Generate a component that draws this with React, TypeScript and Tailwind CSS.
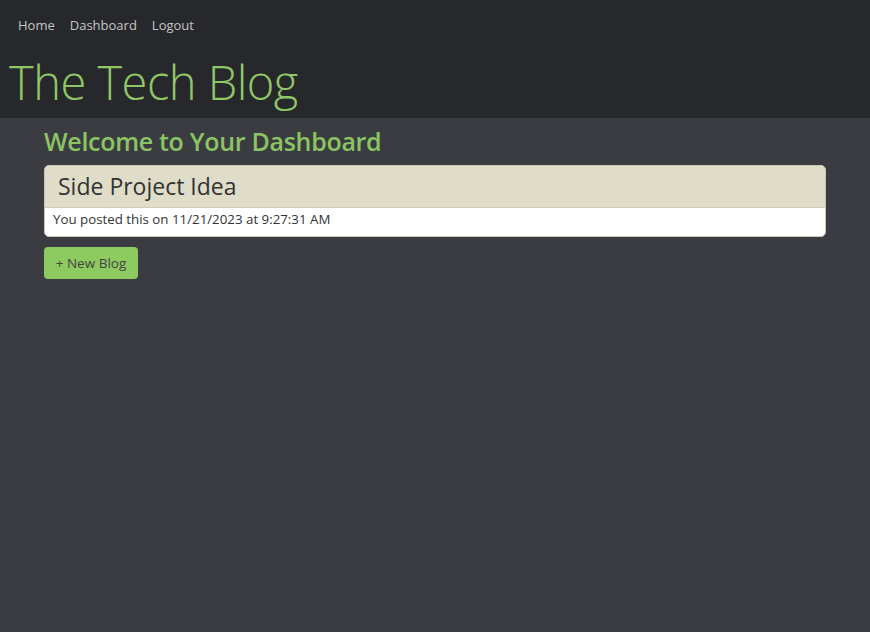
export default function App() {
  return (
    <div className="min-h-[632px] bg-[#3b3c42] font-['Open_Sans',sans-serif]">
      <header className="bg-[#27282c] h-[118px] flex flex-col">
        <nav className="flex gap-[15px] pl-[18px] pt-[16px] text-[13px] text-[#c4c4c4]">
          <a>Home</a>
          <a>Dashboard</a>
          <a>Logout</a>
        </nav>
        <h1 className="pl-[9px] mt-[16px] text-[47px] font-light leading-[60px] text-[#8fc766] tracking-[-0.5px]">The Tech Blog</h1>
      </header>
      <main className="px-[44px] pt-[5px]">
        <h2 className="text-[25px] font-semibold text-[#8bc462] leading-[36px] tracking-[-0.3px]">Welcome to Your Dashboard</h2>
        <div className="mt-[6px] rounded-[5px] overflow-hidden bg-white border border-[#c9c6b4]">
          <div className="bg-[#dfdcc8] h-[42px] flex items-center px-[13px] border-b border-[#cfccb8]">
            <span className="text-[23px] text-[#333] leading-none">Side Project Idea</span>
          </div>
          <div className="h-[28px] flex items-center px-[8px] pb-[4px] text-[13.3px] text-[#333]">
            You posted this on 11/21/2023 at 9:27:31 AM
          </div>
        </div>
        <button className="mt-[10px] w-[94px] h-[32px] rounded-[4px] bg-[#8dca60] text-[13.5px] text-[#444]">+ New Blog</button>
      </main>
    </div>
  );
}
